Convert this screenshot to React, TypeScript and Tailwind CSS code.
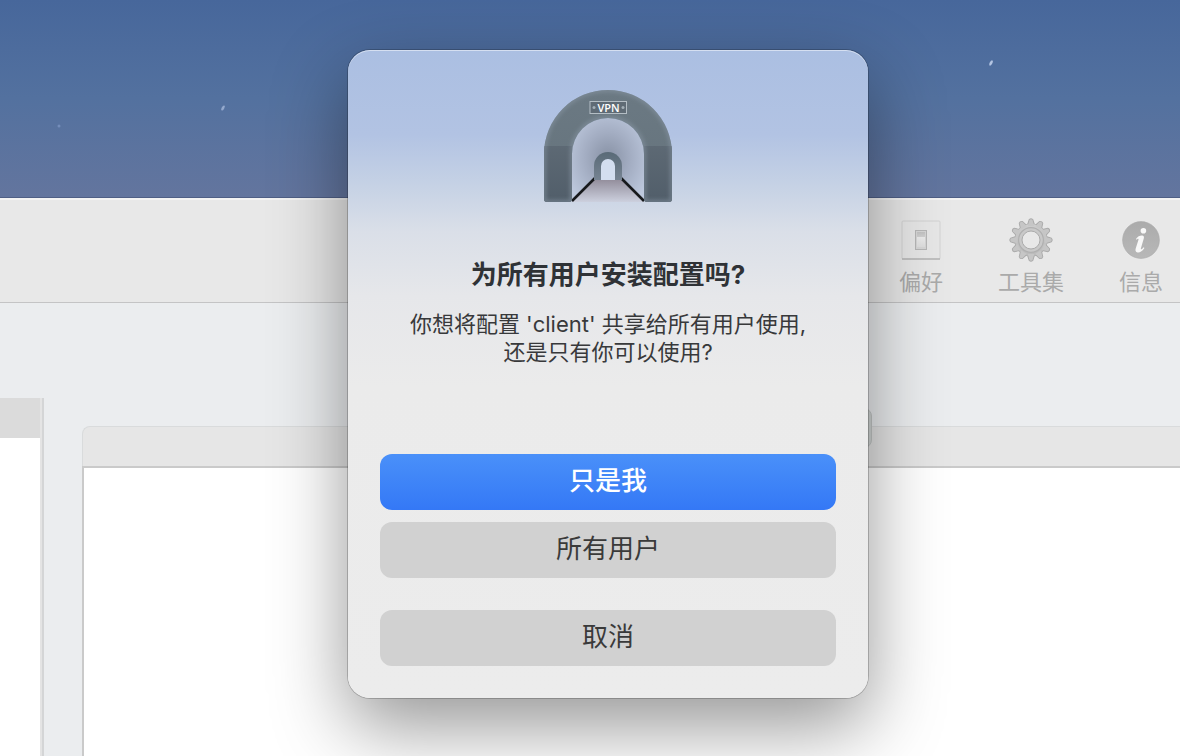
import React from "react";

function TunnelIcon() {
  return (
    <svg width="128" height="112" viewBox="0 0 128 112" role="img" aria-label="VPN">
      <defs>
        <linearGradient id="arch" x1="0" y1="0" x2="0" y2="1">
          <stop offset="0" stopColor="#6b7983" />
          <stop offset="1" stopColor="#65737c" />
        </linearGradient>
        <linearGradient id="pillar" x1="0" y1="0" x2="0" y2="1">
          <stop offset="0" stopColor="#5d6974" />
          <stop offset="1" stopColor="#515e6a" />
        </linearGradient>
        <radialGradient id="inside" cx="0.5" cy="0.48" r="0.62">
          <stop offset="0" stopColor="#8791a4" />
          <stop offset="0.5" stopColor="#a3adc2" />
          <stop offset="1" stopColor="#bdc8dd" />
        </radialGradient>
        <linearGradient id="floor" x1="0" y1="0" x2="0" y2="1">
          <stop offset="0" stopColor="#948f9d" />
          <stop offset="1" stopColor="#ccd0de" />
        </linearGradient>
        <linearGradient id="smallArch" x1="0" y1="0" x2="0" y2="1">
          <stop offset="0" stopColor="#596a77" />
          <stop offset="1" stopColor="#768392" />
        </linearGradient>
        <filter id="soft" x="-0.1" y="-0.1" width="1.2" height="1.2">
          <feGaussianBlur stdDeviation="2" />
        </filter>
        <clipPath id="archClip">
          <path d="M0 64a64 64 0 0 1 128 0v45q0 3-3 3h-22q-3 0-3-3V64a36 36 0 0 0-72 0v45q0 3-3 3H3q-3 0-3-3Z" />
        </clipPath>
      </defs>
      <path d="M28 112V64a36 36 0 0 1 72 0v48Z" fill="url(#inside)" />
      <path d="M28 112 50 90h28l22 22Z" fill="url(#floor)" />
      <path d="M28 111 51 88M100 111 77 88" stroke="#17191c" strokeWidth="2.6" />
      <path d="M50 90V76a14 14 0 0 1 28 0v14Z" fill="url(#smallArch)" />
      <path d="M57 90V76a7 7 0 0 1 14 0v14Z" fill="#d3def0" />
      <g clipPath="url(#archClip)">
        <rect width="128" height="112" fill="url(#arch)" />
        <path d="M0 56h28v56H0ZM100 56h28v56h-28Z" fill="url(#pillar)" />
        <path
          d="M0 64a64 64 0 0 1 128 0v45q0 3-3 3h-22q-3 0-3-3V64a36 36 0 0 0-72 0v45q0 3-3 3H3q-3 0-3-3Z"
          fill="none"
          stroke="#8f9dab"
          strokeOpacity="0.7"
          strokeWidth="3"
          filter="url(#soft)"
        />
      </g>
      <rect x="46" y="11.500" width="36.500" height="12" fill="#5f6b75" stroke="#b4bec5" />
      <circle cx="50" cy="17.500" r="1.500" fill="#a3afb7" />
      <circle cx="79" cy="17.500" r="1.500" fill="#a3afb7" />
      <text
        x="64.500"
        y="21.500"
        textAnchor="middle"
        fontFamily="'Open Sans', 'Noto Sans', sans-serif"
        fontSize="11"
        fontWeight="600"
        fill="#fff"
      >
        VPN
      </text>
    </svg>
  );
}

function SwitchIcon() {
  return (
    <svg width="44" height="44" viewBox="0 0 44 44" aria-hidden="true">
      <defs>
        <linearGradient id="rocker" x1="0" y1="0" x2="0" y2="1">
          <stop offset="0" stopColor="#c2c2c2" />
          <stop offset="0.3" stopColor="#cfcfcf" />
          <stop offset="0.35" stopColor="#ececec" />
          <stop offset="1" stopColor="#dedede" />
        </linearGradient>
      </defs>
      <rect x="3" y="3" width="38" height="38" rx="1" fill="#e7e7e7" stroke="#d2d2d2" />
      <path d="M3 41h38" stroke="#b6b6b6" strokeWidth="1.400" />
      <rect x="16.500" y="12.500" width="11" height="19" fill="#d6d6d6" stroke="#b6b6b6" />
      <rect x="18" y="14" width="8" height="15" fill="url(#rocker)" />
    </svg>
  );
}

const TEETH = Array.from({ length: 12 }, (_, i) => i * 30);

function GearIcon() {
  return (
    <svg width="44" height="44" viewBox="0 0 44 44" aria-hidden="true">
      <defs>
        <linearGradient id="gear" x1="0" y1="0" x2="0" y2="1">
          <stop offset="0" stopColor="#cdcdcd" />
          <stop offset="1" stopColor="#bababa" />
        </linearGradient>
        <mask id="gearHole">
          <rect width="44" height="44" fill="#fff" />
          <circle cx="22" cy="22" r="9" fill="#000" />
        </mask>
      </defs>
      <g mask="url(#gearHole)">
        <g stroke="#ababab" strokeWidth="1.200" fill="#ababab">
          {TEETH.map((a) => (
            <path key={a} d="M18.600 7 20.300 1.700Q22 .2 23.700 1.700L25.400 7Z" transform={`rotate(${a} 22 22)`} />
          ))}
          <circle cx="22" cy="22" r="16" />
        </g>
        <circle cx="22" cy="22" r="16" fill="url(#gear)" />
        <g fill="#c6c6c6">
          {TEETH.map((a) => (
            <path key={a} d="M18.800 8 20.500 1.900Q22 .7 23.500 1.900L25.200 8Z" transform={`rotate(${a} 22 22)`} />
          ))}
        </g>
        <circle cx="22" cy="22" r="12.400" fill="#c9c9c9" stroke="#b0b0b0" strokeWidth="1.200" />
      </g>
      <circle cx="22" cy="22" r="9" fill="none" stroke="#ababab" />
    </svg>
  );
}

function InfoIcon() {
  return (
    <svg width="44" height="44" viewBox="0 0 44 44" aria-hidden="true">
      <defs>
        <linearGradient id="info" x1="0" y1="0" x2="0" y2="1">
          <stop offset="0" stopColor="#ababab" />
          <stop offset="1" stopColor="#b8b8b8" />
        </linearGradient>
      </defs>
      <circle cx="22" cy="22" r="18.400" fill="url(#info)" stroke="#a9a9a9" strokeWidth="0.600" />
      <circle cx="24.400" cy="12.800" r="2.800" fill="#f8f8f8" />
      <path
        d="M17 21c1.800-2.800 4.800-3.900 7-3.300 1.200.4 1.100 1.700.7 3L22 30c-.4 1.400.1 1.700 1 .9l1.700-1.700.7.7c-1.900 3.100-4.500 4.800-6.800 4.500-2-.3-2.500-1.900-1.900-3.900l2.700-8.400c.4-1.400-.2-1.700-1-1l-.8.600Z"
        fill="#f8f8f8"
      />
    </svg>
  );
}

const TOOLS = [
  { label: "偏好", Icon: SwitchIcon },
  { label: "工具集", Icon: GearIcon },
  { label: "信息", Icon: InfoIcon },
];

function Sky() {
  return (
    <div className="h-[198px] border-b border-[#4f5f85] bg-linear-to-b from-[#47679b] via-[#53719f] to-[#63759e]">
      <svg className="h-full w-full" aria-hidden="true">
        <ellipse cx="223" cy="108" rx="1.300" ry="2.800" fill="#94a9cd" transform="rotate(30 223 108)" />
        <ellipse cx="991" cy="63" rx="1.300" ry="3" fill="#b3c4e2" transform="rotate(30 991 63)" />
        <circle cx="59" cy="126" r="1.500" fill="#748dba" />
      </svg>
    </div>
  );
}

function BackgroundWindow() {
  return (
    <div className="flex flex-1 flex-col bg-[#ebedef]">
      <nav className="flex h-[105px] justify-end gap-[55px] border-t-2 border-b border-t-[#f3f3f3] border-b-[#c4c4c5] bg-[#e8e8e8] pt-[18px] pr-[17px]">
        {TOOLS.map(({ label, Icon }) => (
          <button key={label} type="button" className="flex flex-col items-center gap-1.5 self-start text-[22px] leading-7 text-[#aaaaaa]">
            <Icon />
            {label}
          </button>
        ))}
      </nav>
      <div className="flex flex-1">
        <aside className="mt-[95px] flex w-11 flex-col border-r-2 border-[#d4d5d6]">
          <div className="flex flex-1 flex-col border-r-2 border-[#e4e4e4] bg-white">
            <div className="h-10 bg-[#dbdbdb]" />
          </div>
        </aside>
        <section className="relative mt-[123px] ml-[38px] flex flex-1 flex-col">
          <div className="h-10 rounded-tl-lg border-t border-l border-[#d9dbdc] bg-[#e6e6e6]" />
          <div className="flex-1 border-t-2 border-l-2 border-[#cacaca] bg-white" />
          <div className="absolute -top-[18px] right-[308px] h-10 w-[440px] rounded-lg border border-[#c4c8c7] bg-[#d3d7d6]" />
        </section>
      </div>
    </div>
  );
}

function InstallDialog() {
  return (
    <div
      role="dialog"
      aria-modal="true"
      aria-labelledby="dialog-title"
      aria-describedby="dialog-text"
      className="flex w-[520px] flex-col items-center rounded-[22px] bg-[linear-gradient(180deg,#abbfe2_0%,#b2c3e3_13%,#c6d2e5_21%,#dadfe8_28%,#e6e7ea_38%,#ebebeb_52%,#ececec_100%)] px-8 pt-10 pb-8 shadow-[inset_0_1px_0_rgba(255,255,255,0.5),0_0_0_1px_rgba(0,0,0,0.2),0_28px_76px_rgba(0,0,0,0.42)]"
    >
      <TunnelIcon />
      <h1 id="dialog-title" className="mt-[57px] text-[26px] leading-8 font-bold text-[#2f3236]">
        为所有用户安装配置吗?
      </h1>
      <p id="dialog-text" className="mt-[19px] text-center text-[22px] leading-7 text-[#38393b]">
        你想将配置 'client' 共享给所有用户使用,
        <br />
        还是只有你可以使用?
      </p>
      <div className="mt-[88px] flex w-full flex-col gap-3 text-[26px] leading-8 text-[#3a3a3a]">
        <button type="button" className="h-14 rounded-xl bg-linear-to-b from-[#4a90f9] to-[#3478f6] pb-0.5 font-medium text-white">
          只是我
        </button>
        <button type="button" className="h-14 rounded-xl bg-[#d1d1d1] pb-0.5">
          所有用户
        </button>
        <button type="button" className="mt-5 h-14 rounded-xl bg-[#d1d1d1] pb-0.5">
          取消
        </button>
      </div>
    </div>
  );
}

export default function App() {
  return (
    <main
      lang="zh-CN"
      className="relative flex min-h-screen flex-col overflow-hidden font-['Inter','Noto_Sans_CJK_SC',sans-serif]"
    >
      <Sky />
      <BackgroundWindow />
      <div className="absolute inset-x-0 top-[50px] flex justify-center pl-9">
        <InstallDialog />
      </div>
    </main>
  );
}
